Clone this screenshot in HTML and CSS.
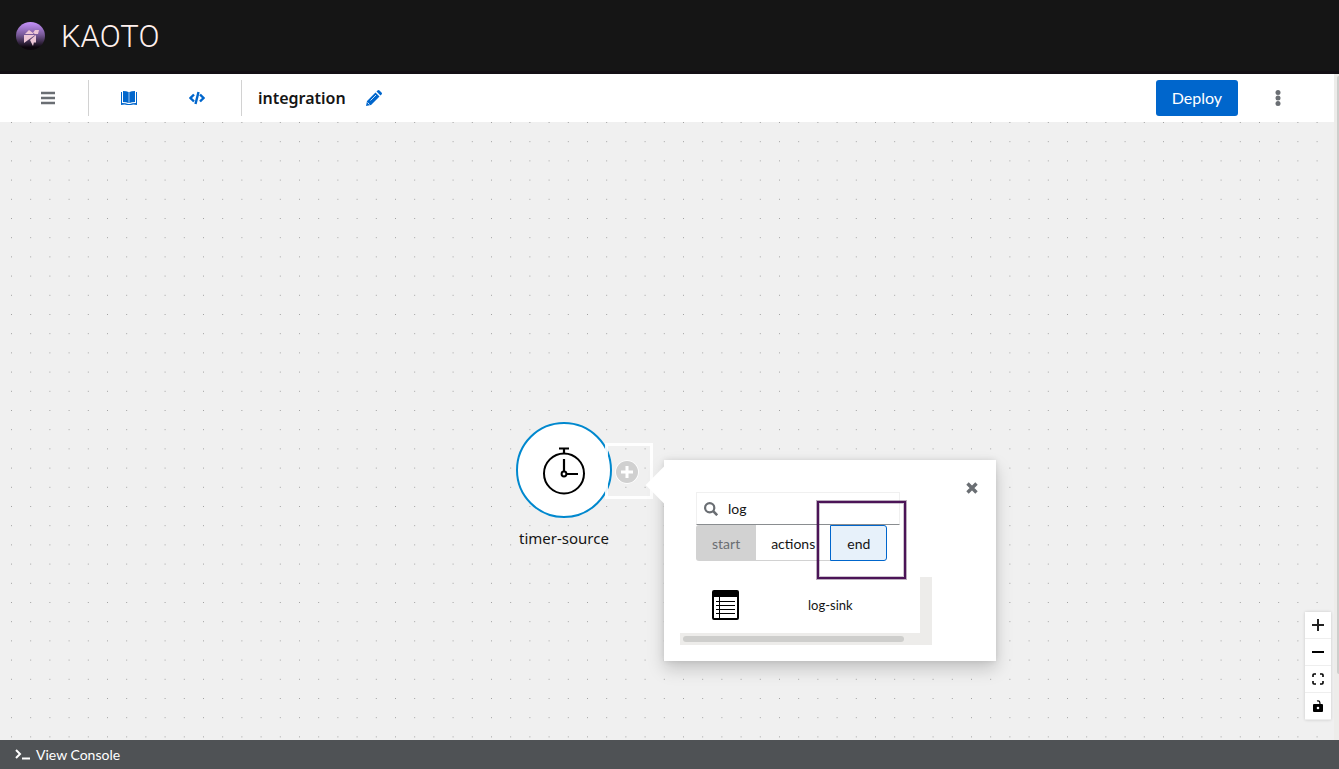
FILE: index.html
```
<!DOCTYPE html>
<html lang="en">
<head>
<meta charset="utf-8">
<title>Kaoto</title>
<link rel="stylesheet" href="styles.css">
</head>
<body>
<header class="masthead">
  <svg class="brand-mark" viewBox="0 0 30 30" aria-hidden="true">
    <defs><linearGradient id="orb" x1="0" y1="0" x2="0" y2="1"><stop offset="0" stop-color="#c792fc"/><stop offset=".45" stop-color="#795a99"/><stop offset=".9" stop-color="#0c060d"/></linearGradient></defs>
    <ellipse cx="14.500" cy="15" rx="14.500" ry="14" fill="url(#orb)"/>
    <path d="M9 13l4-4 4 3v1zM8 14h11l-11 8zM17 12l2-3h4l-1 4h-3zM14 19l6-5v7l-1 1-1-1-1 4z" fill="#ecc6d6"/>
  </svg>
  <span class="brand-name">KAOTO</span>
</header>
<main class="workspace">
  <div class="editor">
    <div class="toolbar">
      <div class="group group-menu">
        <button class="icon-button muted" aria-label="Menu"><svg width="14" height="14" viewBox="0 0 14 14"><path d="M0 2h14M0 7h14M0 12h14" stroke="currentColor" stroke-width="2.400"/></svg></button>
      </div>
      <div class="group group-views">
        <button class="icon-button" aria-label="Catalog"><svg width="16" height="14" viewBox="0 0 16 14" fill="currentColor"><path d="M2 0q3.600 0 5.500 1v11q-2-1-5.500-1zM14 0q-3.600 0-5.500 1v11q2-1 5.500-1zM0 1h1v11q4 0 6 1h2q2-1 6-1V1h1v13q-4-1-6 0H6q-2-1-6 0z"/><path d="M7 1h2v11H7z" opacity=".4"/></svg></button>
        <button class="icon-button" aria-label="Source code"><svg width="16" height="14" viewBox="0 0 16 14" fill="none" stroke="currentColor" stroke-width="2.400"><path d="M5 3.500L1.500 7 5 10.500M11 3.500L14.500 7 11 10.500M9.500 1l-3 12"/></svg></button>
      </div>
      <h1 class="integration-name">integration</h1>
      <button class="icon-button" aria-label="Edit name"><svg width="16" height="16" viewBox="0 0 16 16" fill="currentColor"><path d="M9.500 2.500l4 4L5 15l-5 1 1-5zM10.500 1.500l1-1q1-1 2 0l2 2q1 1 0 2l-1 1z"/><path d="M4.500 10.500L10 5M1.500 12.500l2 2" stroke="#fff" stroke-width=".8"/></svg></button>
      <button class="deploy">Deploy</button>
      <button class="icon-button muted kebab" aria-label="More actions"><svg width="6" height="16" viewBox="0 0 6 16" fill="currentColor"><circle cx="3" cy="2.500" r="2.500"/><circle cx="3" cy="8" r="2.500"/><circle cx="3" cy="13.500" r="2.500"/></svg></button>
    </div>
    <section class="canvas" aria-label="Integration canvas">
      <svg class="grid" aria-hidden="true">
        <defs><pattern id="dots" width="15" height="15" patternUnits="userSpaceOnUse" patternTransform="translate(11 0) scale(1.28)"><circle cx=".4" cy=".4" r=".4" fill="#8a8a8a"/></pattern></defs>
        <rect width="100%" height="100%" fill="url(#dots)"/>
      </svg>
      <div class="node">
        <svg width="44" height="50" viewBox="0 0 44 50" fill="none" stroke="#000" stroke-width="2"><circle cx="22" cy="28.500" r="20"/><path d="M17 3.500h10M22 4v5M22 14v12M24.500 29H36" stroke-width="2.200"/><circle cx="22" cy="29" r="2.400"/></svg>
      </div>
      <p class="node-label">timer-source</p>
      <div class="insert-box">
        <button class="insert" aria-label="Insert step"><svg width="24" height="24" viewBox="0 0 24 24"><circle cx="12" cy="12" r="11.800" fill="#fff"/><circle cx="12" cy="12" r="11" fill="#d0d0d0"/><path d="M12 6v12M6 12h12" stroke="#fff" stroke-width="3"/></svg></button>
      </div>
      <div class="popover" role="dialog" aria-label="Add step">
        <div class="arrow"></div>
        <button class="close" aria-label="Close"><svg width="12" height="12" viewBox="0 0 12 12"><path d="M1.500 1.500l9 9M10.500 1.500l-9 9" stroke="currentColor" stroke-width="3.400"/></svg></button>
        <label class="search">
          <svg width="14" height="14" viewBox="0 0 14 14" fill="none" stroke="#6a6e73"><circle cx="5.700" cy="5.700" r="4.600" stroke-width="2.200"/><path d="M9.200 9.200l4 4" stroke-width="2.600"/></svg>
          <input type="text" value="log" aria-label="Search steps">
        </label>
        <div class="toggle">
          <button disabled>start</button><button>actions</button><button class="selected">end</button>
        </div>
        <div class="results">
          <button class="result">
            <svg width="27" height="30" viewBox="0 0 27 30"><rect x="1" y="1" width="25" height="28" rx="1" fill="#fff" stroke="#000" stroke-width="2"/><path d="M1 1h25v6H1z"/><path d="M4 11.500h19M4 15.500h19M4 19.500h19M4 23.500h19M7.500 7v22" stroke="#000" stroke-width="1"/></svg>
            <span>log-sink</span>
          </button>
          <div class="track-y"></div>
          <div class="track-x"><div class="thumb-x"></div></div>
        </div>
        <div class="highlight"></div>
      </div>
      <div class="zoom-controls">
        <button aria-label="Zoom in"><svg width="12" height="12" viewBox="0 0 12 12"><path d="M6 0v12M0 6h12" stroke="#222" stroke-width="2"/></svg></button>
        <button aria-label="Zoom out"><svg width="12" height="12" viewBox="0 0 12 12"><path d="M0 6h12" stroke="#000" stroke-width="2"/></svg></button>
        <button aria-label="Fit view"><svg width="12" height="12" viewBox="0 0 12 12"><path d="M1 4V2q0-1 1-1h2M8 1h2q1 0 1 1v2M11 8v2q0 1-1 1H8M4 11H2q-1 0-1-1V8" fill="none" stroke="#000" stroke-width="1.600"/></svg></button>
        <button aria-label="Lock view"><svg width="10" height="12" viewBox="0 0 10 12"><path d="M4 1q3-1 3 3" fill="none" stroke="#000" stroke-width="1.200"/><rect y="4" width="10" height="8" rx="1"/><circle cx="5" cy="8" r="1.300" fill="#fff"/></svg></button>
      </div>
    </section>
  </div>
  <div class="page-track"><div class="page-thumb"></div></div>
</main>
<footer class="console">
  <button class="console-button"><svg width="15" height="11" viewBox="0 0 15 11" fill="none" stroke="#fff" stroke-width="2"><path d="M1 1l4 4-4 4M7 9.500h8"/></svg>View Console</button>
</footer>
</body>
</html>
```
FILE: styles.css
```
* { box-sizing: border-box; }
body { margin: 0; height: 100vh; display: flex; flex-direction: column; font-family: Lato, "Open Sans", sans-serif; font-size: 14px; color: #151515; overflow: hidden; }
button { margin: 0; padding: 0; border: 0; background: none; font: inherit; color: inherit; cursor: pointer; }
svg { display: block; flex: none; }
.masthead { height: 74px; flex: none; display: flex; align-items: center; gap: 15px; padding: 0 16px; background: #151515; border-bottom: 3px solid #130f14; }
.brand-mark { width: 30px; height: 30px; }
.brand-name { padding-top: 2px; font: 300 31px/40px Roboto, sans-serif; color: #fff1ee; }
.workspace { flex: 1; min-height: 0; display: flex; }
.editor { flex: 1; min-width: 0; display: flex; flex-direction: column; }
.toolbar { height: 48px; flex: none; display: flex; align-items: center; padding-right: 32px; background: #fff; }
.group { height: 36px; display: flex; align-items: center; border-right: 1px solid #d2d2d2; }
.group-menu { padding-left: 24px; padding-right: 16px; }
.group-views { padding: 0 20px 0 16px; gap: 20px; }
.icon-button { width: 48px; height: 36px; display: flex; align-items: center; justify-content: center; color: #06c; }
.muted { color: #6a6e73; }
.integration-name { margin: 0 4px 0 16px; font: 600 16px/24px "Noto Sans", sans-serif; color: #151515; }
.deploy { margin-left: auto; margin-right: 16px; height: 36px; padding: 0 16px; border-radius: 3px; background: #06c; color: #fff; font-size: 16px; line-height: 24px; }
.canvas { flex: 1; min-height: 0; position: relative; overflow: hidden; background: #f0f0f0; }
.grid { width: 100%; height: 100%; }
.node { position: absolute; left: 516px; top: 300px; width: 96px; height: 96px; display: flex; align-items: center; justify-content: center; border: 2px solid #0088ce; border-radius: 50%; background: #fff; }
.node-label { position: absolute; left: 504px; top: 404px; width: 120px; margin: 0; text-align: center; font: 15px/24px "Noto Sans", sans-serif; }
.insert-box { position: absolute; left: 605px; top: 321px; width: 48px; height: 56px; display: flex; align-items: center; justify-content: center; padding: 2px 4px 0 0; border: 3px solid rgba(255,255,255,.9); }
.popover { position: absolute; left: 664px; top: 338px; width: 332px; padding: 32px 64px 16px 16px; background: #fff; box-shadow: 0 8px 16px rgba(3,3,3,.18), 0 0 6px rgba(3,3,3,.1); }
.arrow { position: absolute; left: -13px; top: 12px; width: 26px; height: 26px; background: #fff; transform: rotate(45deg); }
.close { position: absolute; right: 16px; top: 20px; width: 16px; height: 16px; display: flex; align-items: center; justify-content: center; color: #6a6e73; }
.search { width: 204px; height: 33px; margin-left: 16px; padding-left: 7px; display: flex; align-items: center; gap: 10px; border: 1px solid #f0f0f0; border-bottom-color: #8a8d90; }
.search input { flex: 1; min-width: 0; height: 24px; padding: 0; border: 0; outline: 0; background: none; font: inherit; line-height: 21px; color: #151515; }
.toggle { display: flex; margin-left: 16px; }
.toggle button { height: 36px; padding: 0 16px; border: 1px solid transparent; border-width: 1px 0; border-bottom-color: #d2d2d2; color: #151515; }
.toggle button:disabled { background: #d2d2d2; color: #6a6e73; border-radius: 3px 0 0 3px; }
.toggle .selected { border: 1px solid #06c; border-radius: 0 3px 3px 0; background: #e7f1fa; }
.toggle button:nth-child(2) { padding: 0 15px; }
.results { margin-top: 16px; display: grid; grid-template-columns: 1fr 12px; grid-template-rows: 56px 12px; }
.result { display: flex; align-items: center; padding: 0 0 0 32px; gap: 69px; font-size: 13px; }
.track-y { background: #edecea; }
.track-x { grid-column: 1 / 3; background: #edecea; padding: 3px; }
.thumb-x { width: 90%; height: 6px; border-radius: 3px; background: #cececc; }
.highlight { position: absolute; left: 153px; top: 41px; width: 89px; height: 78px; border: 2px solid #4b1457; box-shadow: 0 0 0 1px rgba(60,20,70,.35), inset 0 0 0 1px rgba(60,20,70,.25); pointer-events: none; }
.zoom-controls { position: absolute; right: 3px; bottom: 20px; width: 26px; background: #fff; box-shadow: 0 0 3px rgba(0,0,0,.16); }
.zoom-controls button { width: 100%; height: 27px; display: flex; align-items: center; justify-content: center; border-bottom: 1px solid #eee; }
.page-track { width: 5px; background: #edecea; padding: 2px 0 0 3px; }
.page-thumb { height: 90%; border-radius: 3px 0 0 3px; background: #cececc; }
.console { flex: none; height: 29px; display: flex; align-items: center; padding: 0 15px; background: #4f5255; color: #fff; }
.console-button { display: flex; align-items: center; gap: 6px; line-height: 21px; }
```
